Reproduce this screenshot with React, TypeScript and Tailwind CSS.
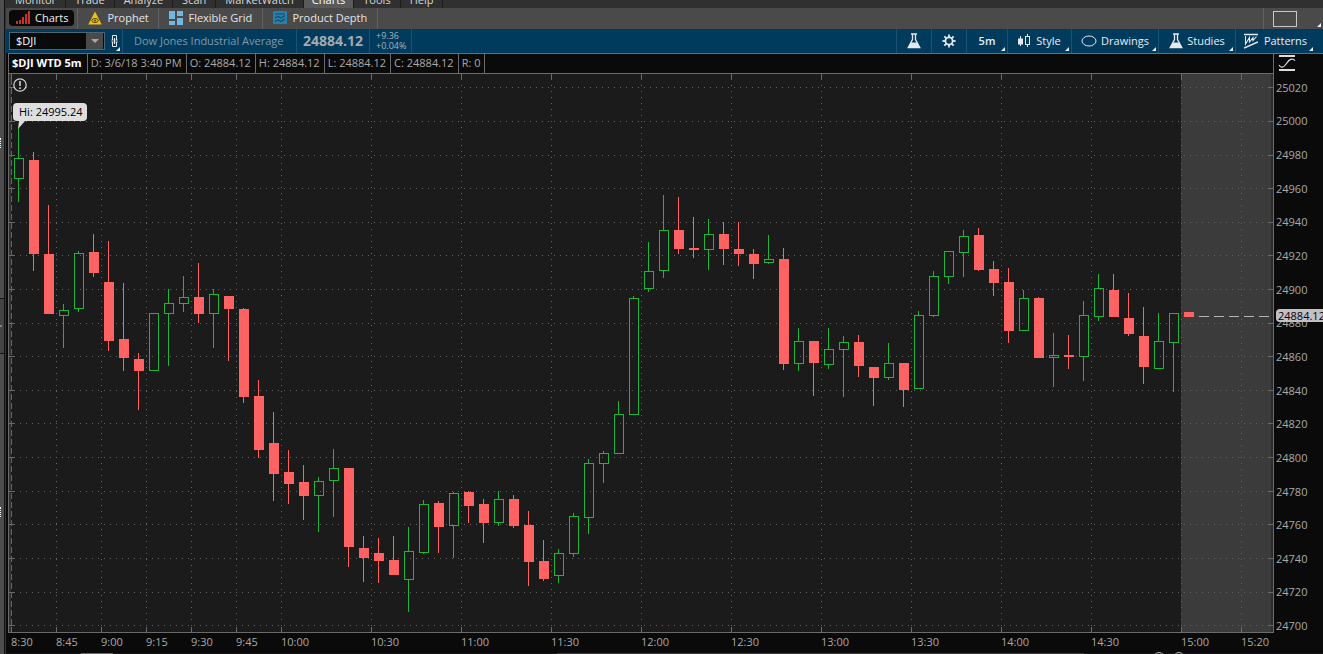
import React, { useState } from "react";

// [high, body top, body bottom, low, up?] in chart units, one entry per 5 minutes
const candles: number[][] = [
    [128, 158, 179, 202, 1], [152, 160, 254, 271, 0], [205, 254, 314, 314, 0], [304, 310, 316, 348, 1],
    [251, 253, 309, 312, 1], [234, 252, 273, 277, 0], [241, 282, 341, 351, 0], [283, 339, 358, 371, 0],
    [353, 359, 371, 410, 0], [313, 313, 371, 371, 1], [289, 303, 314, 366, 1], [276, 297, 304, 312, 1],
    [263, 297, 314, 323, 0], [289, 294, 314, 348, 1], [296, 296, 309, 361, 0], [308, 309, 397, 403, 0],
    [380, 396, 450, 458, 0], [412, 443, 474, 501, 0], [450, 472, 484, 504, 0], [465, 482, 496, 520, 0],
    [477, 481, 496, 532, 1], [449, 468, 481, 517, 1], [468, 468, 547, 567, 0], [536, 548, 558, 582, 0],
    [538, 553, 561, 583, 0], [536, 560, 575, 575, 0], [527, 551, 580, 612, 1], [500, 504, 553, 554, 1],
    [501, 503, 527, 553, 0], [492, 493, 526, 558, 1], [491, 492, 506, 523, 0], [499, 504, 523, 543, 0],
    [491, 499, 523, 526, 1], [495, 499, 526, 528, 0], [511, 525, 562, 586, 0], [540, 561, 579, 581, 0],
    [549, 553, 576, 583, 1], [513, 516, 554, 557, 1], [459, 463, 518, 534, 1], [451, 453, 464, 483, 1],
    [401, 414, 454, 454, 1], [296, 298, 415, 415, 1], [242, 271, 289, 292, 1], [195, 230, 271, 278, 1],
    [197, 230, 249, 254, 0], [217, 248, 250, 258, 0], [219, 234, 250, 270, 1], [222, 234, 249, 265, 0],
    [222, 249, 254, 266, 0], [249, 254, 264, 279, 0], [235, 259, 263, 264, 1], [248, 259, 364, 370, 0],
    [328, 341, 364, 371, 1], [341, 341, 363, 396, 0], [328, 349, 365, 369, 1], [336, 342, 350, 397, 1],
    [335, 342, 366, 377, 0], [367, 367, 378, 406, 0], [343, 363, 378, 380, 1], [363, 363, 390, 407, 0],
    [311, 315, 389, 389, 1], [271, 276, 316, 317, 1], [251, 251, 277, 284, 1], [230, 236, 253, 277, 1],
    [228, 235, 270, 271, 0], [261, 269, 283, 296, 0], [268, 282, 331, 343, 0], [290, 298, 331, 331, 1],
    [297, 298, 358, 358, 0], [333, 355, 358, 387, 1], [335, 355, 357, 369, 0], [301, 315, 357, 381, 1],
    [274, 288, 317, 321, 1], [274, 290, 317, 317, 0], [293, 318, 334, 336, 0], [307, 336, 367, 384, 0],
    [313, 341, 369, 369, 1], [313, 313, 343, 392, 1], [312, 312, 317, 317, 0],
];

// label and minutes until the next one
const times: [string, number][] = [
    ["8:30", 15], ["8:45", 15], ["9:00", 15], ["9:15", 15], ["9:30", 15], ["9:45", 15],
    ["10:00", 30], ["10:30", 30], ["11:00", 30], ["11:30", 30], ["12:00", 30], ["12:30", 30],
    ["13:00", 30], ["13:30", 30], ["14:00", 30], ["14:30", 30], ["15:00", 20], ["15:20", 11],
];

const prices: number[] = [];
for (let p = 25020; p >= 24700; p -= 20) prices.push(p);

const menu = ["Monitor", "Trade", "Analyze", "Scan", "MarketWatch", "Charts", "Tools", "Help"];

const quote = ["D: 3/6/18 3:40 PM", "O: 24884.12", "H: 24884.12", "L: 24884.12", "C: 24884.12", "R: 0"];

function Corner() {
    return (
        <svg className="absolute right-0.5 bottom-0.5 size-1" viewBox="0 0 4 4" aria-hidden="true">
            <path d="M4 0V4H0Z" fill="#e8eef2" />
        </svg>
    );
}

function Flask() {
    return (
        <svg className="h-4 w-3.5 shrink-0" viewBox="0 0 14 16" fill="none" stroke="#e3e9ed" aria-hidden="true">
            <path d="M4 1h6M5.5 1v5.5L1.2 14.5h11.6L8.5 6.5V1" strokeWidth="1.3" />
            <path d="M4 9.5h6l3 5.2H1Z" fill="#e3e9ed" stroke="none" />
        </svg>
    );
}

function Gear() {
    return (
        <svg className="size-3.5" viewBox="-7 -7 14 14" fill="none" stroke="#e3e9ed" aria-hidden="true">
            <circle r="3.6" strokeWidth="1.8" />
            {[0, 45, 90, 135, 180, 225, 270, 315].map((a) => (
                <path key={a} d="M0 -4V-6.6" strokeWidth="1.8" transform={`rotate(${a})`} />
            ))}
        </svg>
    );
}

function CandleIcon() {
    return (
        <svg className="h-3.5 w-3 shrink-0" viewBox="0 0 12 14" fill="none" stroke="#e3e9ed" aria-hidden="true">
            <path d="M2.5 2V12M9.5 0V3M9.5 10V13" />
            <rect x="0.5" y="5" width="4" height="5" fill="#e3e9ed" />
            <rect x="7.5" y="2.5" width="4" height="8" />
        </svg>
    );
}

function PatternIcon() {
    return (
        <svg className="h-4 w-3.5 shrink-0" viewBox="0 0 14 16" fill="none" stroke="#e3e9ed" aria-hidden="true">
            <path d="M0 1.5H14M0 15L14 9" strokeWidth="1.6" />
            <path d="M1.5 3V11L5.5 4.5V9L9 4.5V7.5L12.5 3.5" strokeWidth="1.1" />
        </svg>
    );
}

function Chart() {
    const vertical: number[] = [];
    let x = 11.5;
    times.forEach(([, minutes]) => {
        vertical.push(x);
        x += minutes * 3;
    });

    return (
        <svg className="absolute inset-0 h-full w-full" viewBox="9 74 1264 558" preserveAspectRatio="none"
             shapeRendering="crispEdges" role="img" aria-label="$DJI 5 minute candles">
            <rect x="9" y="74" width="1264" height="558" fill="#1b1b1b" />
            <rect x="9" y="74" width="2" height="558" fill="#303030" />
            <rect x="1181" y="74" width="90" height="558" fill="#3b3b3b" />
            <rect x="1271" y="74" width="2" height="558" fill="#2c2c2c" />

            {prices.map((p, i) => {
                const y = Math.floor(87.85 + i * 33.61) + 0.5;
                return (
                    <g key={p} stroke="#6a6a6a">
                        <path d={`M14 ${y}H1269`} strokeDasharray="1 5" stroke="#646464" />
                        <path d={`M9 ${y}H14M1268 ${y}H1273`} />
                    </g>
                );
            })}
            {vertical.map((v, i) => (
                <g key={v} stroke="#6a6a6a">
                    <path d={`M${v} 79V627`} strokeDasharray={i === 0 ? "6 3" : "1 5"} stroke="#646464" />
                    <path d={`M${v} 74V79M${v} 627V632`} />
                </g>
            ))}

            {candles.map(([high, top, bottom, low, up], i) => {
                const left = 14 + i * 15;
                const wick = left + 4.5;
                const color = up ? "#21b43c" : "#ff6262";
                return (
                    <g key={i} stroke={color}>
                        <path d={`M${wick} ${high}V${top}M${wick} ${bottom}V${low}`} />
                        {up ? (
                            <rect x={left + 0.5} y={top + 0.5} width="9" height={bottom - top - 1} fill="none" />
                        ) : (
                            <rect x={left} y={top} width="10" height={bottom - top} fill={color} stroke="none" />
                        )}
                    </g>
                );
            })}
            <path d="M1199 316.5H1269" stroke="#b4b4b4" strokeDasharray="10 5" />
        </svg>
    );
}

export default function App() {
    const [symbol, setSymbol] = useState("$DJI");

    const tab = "flex items-center gap-[5px] border-r border-[#626262] pb-0.5 text-[#e4e4e4]";
    const tool = "relative flex items-center justify-center border-l border-[#1d5272] text-[#e6ecf0]";

    return (
        <div className="flex h-screen min-h-96 overflow-hidden bg-[#0a0a0a] font-['Open_Sans',sans-serif] text-[11px] leading-4">
            {/* collapsed side panel */}
            <aside className="flex w-1.5 shrink-0 flex-col border-r border-[#0b3f63] bg-[#4e4e4e]">
                <div className="flex flex-[300] flex-col justify-center border-r border-[#111] pb-3">
                    <div className="h-2.5 w-px border-l border-dotted border-white" />
                </div>
                <div className="flex flex-[56] flex-col justify-center border-y border-r border-[#111] bg-[#444]">
                    <div className="size-0.5 rounded-full bg-[#999]" />
                </div>
                <div className="flex flex-[298] flex-col justify-center border-r border-[#111] pt-4">
                    <div className="h-2.5 w-px border-l border-dotted border-white" />
                </div>
            </aside>

            <main className="flex min-w-0 flex-1 flex-col">
                <nav className="flex h-2 shrink-0 items-end overflow-hidden bg-[#303030] text-[#d6d6d6]">
                    {menu.map((name) => (
                        <a key={name} href="#"
                           className={name === "Charts"
                               ? "border-r border-[#1c1c1c] bg-[#5a5a5a] px-2 text-white"
                               : "border-r border-[#1c1c1c] px-[9px]"}>
                            {name}
                        </a>
                    ))}
                </nav>

                <div className="flex h-[21px] shrink-0 bg-[#4a4a4a]">
                    <div className="flex items-center border-r border-[#626262] px-[3px] pb-0.5">
                        <button className="flex h-4 items-center gap-1 rounded-sm bg-[#090909] px-1.5 text-[#f0f0f0]">
                            <svg className="h-3.5 w-4" viewBox="0 0 16 14" aria-hidden="true">
                                <path d="M1 10h2v3H1zM4 9h2v4H4zM7 6h2v7H7zM10 3h2v10h-2zM13 0h2v13h-2z" fill="#c9302c" />
                            </svg>
                            Charts
                        </button>
                    </div>
                    <button className={`${tab} w-[81px] pl-2.5`}>
                        <svg className="h-3.5 w-3.5" viewBox="0 0 14 14" aria-hidden="true">
                            <path d="M7 0.5L13.7 13.5H0.3Z" fill="#e9c318" />
                            <ellipse cx="7" cy="9.5" rx="3.2" ry="2" fill="none" stroke="#544400" />
                            <circle cx="7" cy="9.5" r="1" fill="#544400" />
                        </svg>
                        Prophet
                    </button>
                    <button className={`${tab} w-[104px] pl-2.5`}>
                        <svg className="h-3.5 w-3.5" viewBox="0 0 14 14" aria-hidden="true">
                            <path d="M0 0h6v8H0zM0 10h6v4H0zM8 0h6v5H8zM8 7h6v7H8z" fill="#73b6e0" />
                        </svg>
                        Flexible Grid
                    </button>
                    <button className={`${tab} w-[115px] pl-2.5`}>
                        <svg className="h-3.5 w-3.5" viewBox="0 0 14 14" fill="none" aria-hidden="true">
                            <rect width="14" height="13" rx="1" fill="#2680ae" />
                            <path d="M2 3H12M2 7L5 5.5L8 7L12 4.5M2 10.5L5 9L8 10.5L12 8" stroke="#164c68" strokeWidth="1.2" />
                        </svg>
                        Product Depth
                    </button>
                    <button aria-label="Layout" className="relative ml-auto w-[60px] border-l border-[#626262] pl-[9px]">
                        <span className="block h-4 w-6 border border-[#c8c8c8]" />
                        <Corner />
                    </button>
                </div>

                <div className="flex h-6 shrink-0 bg-[#003b5e]">
                    <div className="flex items-center pl-[3px]">
                        <div className="flex h-[18px] w-24 border border-[#4d6473] bg-[#0a0a0a] pr-px">
                            <input aria-label="Symbol" value={symbol} onChange={(e) => setSymbol(e.target.value)}
                                   className="w-0 flex-1 px-1.5 text-white outline-none" />
                            <button aria-label="Symbol list" className="flex w-[17px] items-center justify-center bg-[#4a4a4a]">
                                <svg className="h-1 w-2" viewBox="0 0 8 4" aria-hidden="true"><path d="M0 0H8L4 4Z" fill="#a8a8a8" /></svg>
                            </button>
                        </div>
                    </div>
                    <button aria-label="Link" className="relative w-[18px] border-r border-[#1d5272] pl-1.5">
                        <svg className="h-3 w-2" viewBox="0 0 8 12" fill="none" stroke="#e3e9ed" aria-hidden="true">
                            <path d="M1.5 5V0.5H5.5V5M1.5 7V11.5H5.5V7M3.5 3V9M0.5 5H2.5M4.5 5H6.5M0.5 7H2.5M4.5 7H6.5" />
                        </svg>
                        <Corner />
                    </button>
                    <div className="flex w-[174px] items-center border-r border-[#1d5272] pl-[11px] whitespace-nowrap text-[#8397a3]">
                        Dow Jones Industrial Average
                    </div>
                    <div className="flex items-center border-r border-[#1d5272] px-1.5 text-sm font-bold text-[#a3abb0]">24884.12</div>
                    <div className="flex flex-col justify-center border-r border-[#1d5272] pr-[5px] pl-1.5 text-[9px] leading-[10px] text-[#a3b4be]">
                        <span>+9.36</span>
                        <span>+0.04%</span>
                    </div>
                    <div className="ml-auto flex pr-2">
                        <button aria-label="Lab" className={`${tool} w-[35px]`}><Flask /></button>
                        <button aria-label="Settings" className={`${tool} w-[35px]`}><Gear /></button>
                        <button className={`${tool} w-[41px] font-semibold`}>5m<Corner /></button>
                        <button className={`${tool} w-16 gap-1.5`}><CandleIcon />Style<Corner /></button>
                        <button className={`${tool} w-[87px] gap-1`}>
                            <svg className="h-3 w-4 shrink-0" viewBox="0 0 16 12" fill="none" stroke="#e3e9ed" aria-hidden="true">
                                <ellipse cx="8" cy="6" rx="7" ry="5" />
                            </svg>
                            Drawings
                            <Corner />
                        </button>
                        <button className={`${tool} w-[77px] gap-1`}><Flask />Studies<Corner /></button>
                        <button className={`${tool} w-20 gap-1.5`}><PatternIcon />Patterns<Corner /></button>
                    </div>
                </div>

                <div className="flex min-h-0 flex-1 pl-0.5">
                    <section className="flex min-w-0 flex-1 flex-col">
                        <div className="flex h-5 shrink-0 items-stretch border-x border-t border-[#6b6b6b] text-[#a9a9a9]">
                            <h1 className="border-r border-[#6b6b6b] pr-[5px] pl-[3px] leading-[17px] font-bold text-white">$DJI WTD 5m</h1>
                            {quote.map((item) => (
                                <span key={item} className="border-r border-[#6b6b6b] pr-1 pl-[3px] leading-[17px]">{item}</span>
                            ))}
                        </div>

                        <div className="relative min-h-0 flex-1 border border-[#6b6b6b]">
                            <Chart />
                            <svg className="absolute top-1 left-1 size-3.5" viewBox="0 0 14 14" fill="none" stroke="#cfcfcf" aria-hidden="true">
                                <circle cx="7" cy="7" r="6.2" strokeWidth="1.3" />
                                <path d="M7 3V8M7 9.5V11" strokeWidth="1.6" />
                            </svg>
                            <div className="absolute top-[29px] left-1 rounded bg-[#dedede] pr-1 pl-1.5 leading-[18px] text-black">
                                Hi: 24995.24
                                <svg className="absolute top-full left-1 h-2 w-2" viewBox="0 0 8 8" aria-hidden="true">
                                    <path d="M2 0H8L1 8Z" fill="#dedede" />
                                </svg>
                            </div>
                        </div>

                        <div className="flex h-5 shrink-0 pl-[3px] text-[#a9a9a9]">
                            {times.map(([label, minutes]) => (
                                <span key={label} className="w-0 leading-[17px] whitespace-nowrap" style={{ flexGrow: minutes }}>{label}</span>
                            ))}
                        </div>
                    </section>

                    <aside className="flex w-[49px] shrink-0 flex-col border-t border-[#6b6b6b] text-[#a9a9a9]">
                        <div className="h-[17px] shrink-0 pt-px pl-1">
                            <svg className="h-4 w-[18px]" viewBox="0 0 18 16" fill="none" stroke="#dcdcdc" aria-hidden="true">
                                <path d="M1 1H17M1 15H17" strokeWidth="1.8" />
                                <path d="M1 10C3 13.5 6 12.5 8.5 8.5S14 2.5 17 5.5" strokeWidth="1.2" />
                            </svg>
                        </div>
                        <div className="relative flex min-h-0 flex-1 flex-col pl-0.5">
                            {prices.map((p) => (
                                <span key={p} className="flex h-0 flex-1 items-center">{p}</span>
                            ))}
                            <span className="absolute top-[238px] left-0.5 rounded-sm bg-[#c4bfc4] px-0.5 leading-[13px] text-black">24884.12</span>
                        </div>
                        <div className="h-2.5 shrink-0" />
                    </aside>
                </div>

                {/* time scroll bar */}
                <footer className="relative flex h-px shrink-0 bg-[#161616]">
                    <div className="ml-[75px] w-8 bg-[#6a6a6a]" />
                    <div className="mr-[239px] ml-auto w-2/5 bg-[#3c3c3c]" />
                    <svg className="absolute right-[138px] bottom-0 h-0.5 w-8" viewBox="0 0 32 2" fill="none" stroke="#b0b0b0" aria-hidden="true">
                        <circle cx="6" cy="6" r="5.5" />
                        <circle cx="26" cy="6" r="5.5" />
                    </svg>
                </footer>
            </main>
        </div>
    );
}
